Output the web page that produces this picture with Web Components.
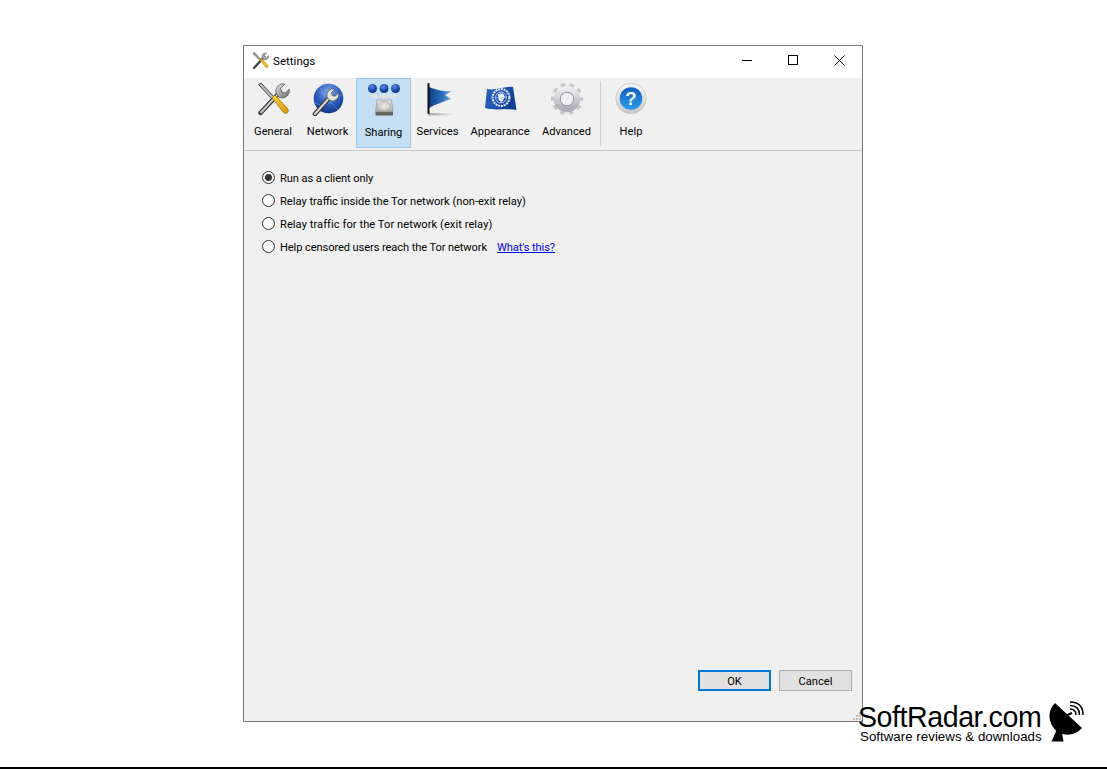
<!DOCTYPE html>
<html><head><meta charset="utf-8"><title>Settings</title>
<style>
html,body{margin:0;padding:0;background:#fff}
body{width:1107px;height:769px;overflow:hidden;font-family:Roboto,"Noto Sans",sans-serif;font-size:11.12px;color:#000;position:relative}
</style></head><body>
<settings-window>
  <tool-button label="General" style="--w:54px" slot="tools"><svg width="34" height="34" viewBox="0 0 34 34">
    <defs><linearGradient id="y" x1="0" y1="0" x2="1" y2="1"><stop offset="0" stop-color="#f7d23c"/><stop offset="1" stop-color="#d99a06"/></linearGradient><linearGradient id="m" x1="0" y1="0" x2="1" y2="1"><stop offset="0" stop-color="#e4e4e4"/><stop offset="1" stop-color="#6a6a6a"/></linearGradient></defs>
    <path d="M4.500 31 L24 10" stroke="#333" stroke-width="4.400" stroke-linecap="round"/><path d="M4.500 31 L24 10" stroke="#c8c8c8" stroke-width="2"/>
    <path d="M20 11 a7.400 7.400 0 0 1 9-9 l-4.500 4.400 1.200 3.500 3.600 1.100 4-4 a7.600 7.600 0 0 1-10 8.600z" fill="url(#m)" stroke="#555" stroke-width=".7"/>
    <path d="M2.500 2.500 L5 1 L18 15 L16 17z" fill="#bcbcbc" stroke="#444" stroke-width="1"/>
    <path d="M16 16 L19 13 L32 27 Q33 29.500 31 31 Q29 32 27.500 30.500z" fill="url(#y)" stroke="#8e6a08" stroke-width=".7"/>
  </svg></tool-button>
  <tool-button label="Network" style="--w:55px;margin-right:1px" slot="tools"><svg width="34" height="34" viewBox="0 0 34 34">
    <defs><radialGradient id="g" cx=".5" cy=".3" r=".8"><stop offset="0" stop-color="#86aeea"/><stop offset=".5" stop-color="#2c5cbe"/><stop offset="1" stop-color="#0c2a78"/></radialGradient></defs>
    <circle cx="17.500" cy="16.500" r="14.800" fill="url(#g)"/>
    <path d="M4 21 Q14 28 31 12 M9 5 Q14 16 27 28" stroke="#8db4ef" stroke-width=".6" fill="none" opacity=".7"/>
    <path d="M4 32 L19 15" stroke="#333" stroke-width="4.600" stroke-linecap="round"/><path d="M4 32 L19 15" stroke="#d4d4d4" stroke-width="2.200" stroke-linecap="round"/>
    <path d="M16 15 a6.500 6.500 0 0 1 8-8 l-3.600 3.600 .8 2.900 2.900.8 3.600-3.600 a6.700 6.700 0 0 1-8.500 8z" fill="#e4e4e4" stroke="#444" stroke-width=".7"/>
  </svg></tool-button>
  <tool-button label="Sharing" active style="--w:55px" slot="tools"><svg width="34" height="34" viewBox="0 0 34 34">
    <defs><radialGradient id="b" cx=".4" cy=".3" r=".8"><stop offset="0" stop-color="#5c8be0"/><stop offset=".6" stop-color="#1a45a8"/><stop offset="1" stop-color="#0b2670"/></radialGradient><linearGradient id="h" x1="0" y1="0" x2="0" y2="1"><stop offset="0" stop-color="#e6e6e6"/><stop offset="1" stop-color="#a9a9a6"/></linearGradient></defs>
    <path d="M5.500 9 V14.500 H28.500 V9 M17 9 V19" stroke="#e2e2dd" stroke-width="2" fill="none"/>
    <circle cx="5.500" cy="6.500" r="4.500" fill="url(#b)"/><circle cx="17" cy="6.500" r="4.500" fill="url(#b)"/><circle cx="28.500" cy="6.500" r="4.500" fill="url(#b)"/>
    <path d="M10 18 H24.500 L26 30 H8.500z" fill="url(#h)" stroke="#8f8f8b" stroke-width=".6"/>
    <rect x="8.500" y="30" width="17.500" height="3.500" fill="#66665f"/>
    <ellipse cx="17" cy="24" rx="6" ry="4.500" fill="#d8d8d6" stroke="#a5a5a2" stroke-width=".6"/><circle cx="17" cy="24" r="1.100" fill="#f2f2f2"/>
  </svg></tool-button>
  <tool-button label="Services" style="--w:53px" slot="tools"><svg width="34" height="34" viewBox="0 0 34 34">
    <defs><linearGradient id="f" x1="0" y1="0" x2="1" y2="0"><stop offset="0" stop-color="#0f3d88"/><stop offset=".6" stop-color="#2f72bf"/><stop offset="1" stop-color="#82b3dc"/></linearGradient><linearGradient id="s" x1="0" y1="0" x2="1" y2="0"><stop offset="0" stop-color="#a8a8a8"/><stop offset="1" stop-color="#efefef"/></linearGradient></defs>
    <rect x="7" y="31" width="26" height="2.500" fill="url(#s)"/>
    <path d="M8 5 C14 7 20 10 31 9 L24 13 L30 17 C22 20 15 22 8 26z" fill="url(#f)"/>
    <rect x="6.500" y="1" width="2" height="31" rx=".8" fill="#111"/>
  </svg></tool-button>
  <tool-button label="Appearance" style="--w:72px" slot="tools"><svg width="34" height="34" viewBox="0 0 34 34">
    <defs><linearGradient id="u" x1="0" y1="0" x2="1" y2=".4"><stop offset="0" stop-color="#2b62bd"/><stop offset=".55" stop-color="#1e56b2"/><stop offset="1" stop-color="#0f3f92"/></linearGradient></defs>
    <path d="M4 7 C12 9 22 4 30 5 L33.500 28 C25 26 11 29 2 26z" fill="url(#u)"/>
    <circle cx="18" cy="15.500" r="8.400" fill="none" stroke="#e8eef9" stroke-width="2" stroke-dasharray="2 .8"/>
    <circle cx="18" cy="15.500" r="5.400" fill="none" stroke="#dbe5f6" stroke-width=".8"/>
    <path d="M15 12 L20 11.500 L22 15 L19 20 L15.500 18z" fill="#eef2fa"/><path d="M18 9.500V21.500M12 15.500H24" stroke="#bcd0ee" stroke-width=".5"/>
  </svg></tool-button>
  <tool-button label="Advanced" style="--w:61px" slot="tools"><svg width="34" height="34" viewBox="0 0 34 34">
    <defs><linearGradient id="c" x1="0" y1="0" x2="0" y2="1"><stop offset="0" stop-color="#ececf0"/><stop offset="1" stop-color="#aeaeb6"/></linearGradient></defs>
    <circle cx="17" cy="17" r="14" fill="none" stroke="#c6c6cc" stroke-width="4" stroke-dasharray="4.400 4.396" stroke-dashoffset="2.200"/>
    <circle cx="17" cy="17" r="10" fill="none" stroke="url(#c)" stroke-width="6.500"/>
    <circle cx="17" cy="17" r="6.800" fill="#efefef" stroke="#8e8e96" stroke-width="1"/>
  </svg></tool-button>
  <span slot="tools" style="display:block;width:1px;height:65px;background:#cfcfcf;margin:3px 2px 0 3px;flex:none"></span>
  <tool-button label="Help" style="--w:56px" slot="tools"><svg width="34" height="34" viewBox="0 0 34 34">
    <defs><linearGradient id="r" x1="0" y1="0" x2="0" y2="1"><stop offset="0" stop-color="#f8f8f8"/><stop offset="1" stop-color="#c6c6c6"/></linearGradient><linearGradient id="q" x1="0" y1="0" x2="0" y2="1"><stop offset="0" stop-color="#115fbb"/><stop offset="1" stop-color="#2e9cec"/></linearGradient></defs>
    <circle cx="17" cy="16.500" r="15.300" fill="url(#r)" stroke="#c2c2c2" stroke-width=".7"/>
    <circle cx="17" cy="16.500" r="11.300" fill="url(#q)"/>
    <text x="17" y="23" text-anchor="middle" font-family="Liberation Sans" font-weight="700" font-size="19" fill="#fff">?</text>
  </svg></tool-button>

  <radio-option checked style="letter-spacing:-.1px">Run as a client only</radio-option>
  <radio-option>Relay traffic inside the Tor network (non-exit relay)</radio-option>
  <radio-option style="letter-spacing:.06px">Relay traffic for the Tor network (exit relay)</radio-option>
  <radio-option style="letter-spacing:-.1px">Help censored users reach the Tor network<a slot="extra" href="#" style="color:#0000ee;text-decoration:underline;margin-left:10px">What's this?</a></radio-option>

  <dialog-button slot="buttons" default>OK</dialog-button>
  <dialog-button slot="buttons">Cancel</dialog-button>
</settings-window>
<soft-radar></soft-radar>
<footer-line></footer-line>
<script>
function def(name, css, html, init){
  customElements.define(name, class extends HTMLElement{
    constructor(){super();const r=this.attachShadow({mode:'open'});r.innerHTML='<style>'+css+'</style>'+html;}
    connectedCallback(){if(init)init(this,this.shadowRoot);}
  });
}
def('settings-window',`
:host{display:flex;flex-direction:column;box-sizing:border-box;width:620px;height:677px;margin:45px 0 0 243px;border:1px solid #7a7a7a;background:#f0f0f0;position:relative}
.title{height:32px;box-sizing:border-box;padding-bottom:4px;background:#fff;display:flex;align-items:center;flex:none}
.title svg.app{margin:0 4px 0 8px}
.title .t{flex:1;font-size:11.600px;padding-top:2px}
.win{width:46px;height:28px;display:flex;align-items:center;justify-content:center}
.tools{display:flex;height:73px;box-sizing:border-box;padding-left:2px;border-bottom:1px solid #c8c8c8;flex:none}
.main{flex:1;display:flex;flex-direction:column;padding:15px 0 0 18px}
.foot{display:flex;justify-content:flex-end;gap:8px;padding:0 10px 30px 0}
.grip{position:absolute;right:0;bottom:0;width:11px;height:10px}
`,`
<div class="title">
 <svg class="app" width="17" height="17" viewBox="0 0 17 17"><path d="M2 16 L12 5" stroke="#444" stroke-width="2.200" stroke-linecap="round"/><path d="M10 5.500 a3.600 3.600 0 0 1 4.600-4.300 l-2.200 2.100 .6 1.500 1.600.6 2-2 a3.800 3.800 0 0 1-5 4.300z" fill="#aaa" stroke="#555" stroke-width=".5"/><path d="M1 1.500 L2.500.5 L9 7.500 L8 8.500z" fill="#aaa" stroke="#444" stroke-width=".6"/><path d="M8 8 L9.500 6.500 L16 13.500 Q16.500 15 15.500 15.500 Q14 16 13.500 15z" fill="#eebb22" stroke="#8e6a08" stroke-width=".4"/></svg>
 <span class="t">Settings</span>
 <span class="win"><svg width="10" height="10"><path d="M0 5.500H10" stroke="#000"/></svg></span>
 <span class="win"><svg width="10" height="10"><rect x=".5" y=".5" width="9" height="9" fill="none" stroke="#000"/></svg></span>
 <span class="win"><svg width="11" height="11"><path d="M.5.500L10.500 10.500M10.500.500L.5 10.500" stroke="#000" stroke-width="1"/></svg></span>
</div>
<div class="tools"><slot name="tools"></slot></div>
<div class="main"><slot></slot></div>
<div class="foot"><slot name="buttons"></slot></div>
<svg class="grip" viewBox="0 0 11 10"><g fill="#bdbdbd"><rect x="8" y="1" width="2" height="2"/><rect x="5" y="4" width="2" height="2"/><rect x="8" y="4" width="2" height="2"/><rect x="2" y="7" width="2" height="2"/><rect x="5" y="7" width="2" height="2"/><rect x="8" y="7" width="2" height="2"/></g></svg>
`);
def('tool-button',`
:host{display:block;flex:none;box-sizing:border-box;width:var(--w,55px);height:70px;border:1px solid transparent;text-align:center}
:host([active]){background:#c4dff4;border-color:#9ccaee}
.w{display:flex;flex-direction:column;align-items:center;height:100%}
.i{height:34px;margin-top:3px;display:flex;justify-content:center}
::slotted(svg){filter:blur(.35px)}
.l{margin-top:8px;white-space:nowrap;line-height:16px}
:host([active]) .l{margin-top:9px}
`,`<div class="w"><div class="i"><slot></slot></div><div class="l"></div></div>`,(el,r)=>{r.querySelector('.l').textContent=el.getAttribute('label');});
def('radio-option',`
:host{display:flex;align-items:center;height:23px;white-space:nowrap}
.c{width:13px;height:13px;box-sizing:border-box;border:1px solid #333;border-radius:50%;background:#fff;display:flex;align-items:center;justify-content:center;margin-right:5px;flex:none}
.d{width:7px;height:7px;border-radius:50%;background:#333;display:none}
:host([checked]) .d{display:block}
.t{padding-top:2px}
`,`<span class="c"><span class="d"></span></span><span class="t"><slot></slot><slot name="extra"></slot></span>`);
def('dialog-button',`
:host{display:flex;align-items:center;justify-content:center;box-sizing:border-box;width:73px;height:21px;background:#e1e1e1;border:1px solid #adadad;padding-top:1px}
:host([default]){border:2px solid #0078d7}
`,`<slot></slot>`);
def('soft-radar',`
:host{position:absolute;left:859px;top:701px;width:226px;height:42px;display:block;color:#000;font-family:"Liberation Sans",Arial,sans-serif}
.a{position:absolute;left:-1px;top:3px;font-size:28.600px;line-height:26px;letter-spacing:-.45px}
.b{position:absolute;left:1px;top:29px;font-size:13.300px;line-height:14px;letter-spacing:.02px}
svg{position:absolute;left:190px;top:0}
`,`<div class="a">SoftRadar.com</div><div class="b">Software reviews &amp; downloads</div>
<svg width="36" height="42" viewBox="0 0 36 42"><path d="M6 2 C-1 9 -1 19 4 26 C10 35 24 37 33 27 Z" fill="#000"/><path d="M8 28 L2.500 40.500 H14.500 L13 32z" fill="#000"/><path d="M16 15 L23 12" stroke="#000" stroke-width="2"/><g fill="none" stroke="#000" stroke-width="1.500"><path d="M21 8 Q27 8 27 14"/><path d="M21 4.500 Q30.500 4.500 30.500 14"/><path d="M21 1 Q34 1 34 14"/></g></svg>`);
def('footer-line',`:host{display:block;position:absolute;left:0;right:0;bottom:0;height:2px;background:#000}`,'');
</script>
</body></html>
